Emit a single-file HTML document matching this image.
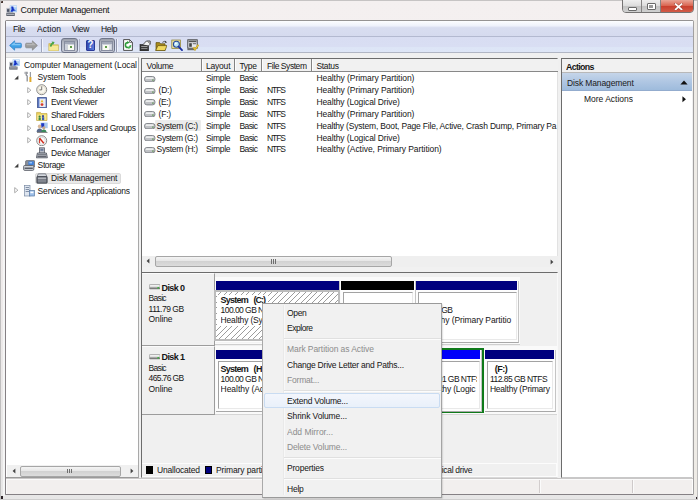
<!DOCTYPE html>
<html lang="en"><head><meta charset="utf-8"><title>Computer Management</title>
<style>

html,body{margin:0;padding:0}
body{width:698px;height:500px;position:relative;overflow:hidden;background:#f4f0f0;font-family:"Liberation Sans",sans-serif;font-size:8.3px;color:#000}
div,span.t,svg{position:absolute;box-sizing:border-box}
.t{white-space:pre;transform:scaleY(1.1);transform-origin:50% 50%}
.vsep{width:1px;background:#a8a8a8;border-right:0}
.hatch{background:repeating-linear-gradient(135deg,#fff 0,#fff 3.25px,#9c9c9c 3.25px,#9c9c9c 4px)}
.thumb{border:1px solid #a6a6a6;border-radius:2px;background:linear-gradient(#f4f4f4 0,#e6e6e6 45%,#d2d2d2 50%,#dcdcdc 100%)}
.tbbtn{border:1.4px solid #70768a;border-radius:3px;background:linear-gradient(#9a9eaa 0,#b4b8c4 30%,#c6cad6 100%)}

</style></head><body>
<div style="left:0px;top:0px;width:698px;height:500px;background:linear-gradient(#f4f0f0 0,#f2eded 40%,#e7e6e6 100%)"></div>
<div style="left:0px;top:0px;width:698px;height:1px;background:#c6c4c4"></div>
<div style="left:0px;top:0px;width:1px;height:500px;background:#c0bfbf"></div>
<div style="left:3px;top:20px;width:2px;height:476px;background:#f5f5f5"></div>
<div style="left:697px;top:0px;width:1px;height:500px;background:#bdbcbc"></div>
<div style="left:694px;top:20px;width:3px;height:476px;background:#eeebe6"></div>
<div style="left:0px;top:499px;width:698px;height:1px;background:#cfcece"></div>
<div style="left:1px;top:1px;width:1.6px;height:2.2px;background:#46342f;border-radius:1px 0 0 0"></div>
<div style="left:1px;top:496.4px;width:1.6px;height:2.4px;background:#2a2024"></div>
<div style="left:695.6px;top:497.4px;width:1.4px;height:1.6px;background:#2a2024"></div>
<span class="t" style="left:20.6px;top:4.20px;font-size:8.9px;line-height:12px;color:#111;letter-spacing:-0.236px;">Computer Management</span>
<svg style="left:6px;top:4.8px;" width="11.4" height="11.4" viewBox="0 0 11 11"><rect x="3.6" y="0.4" width="7.2" height="6.6" fill="#a9cdf4"/><rect x="4.2" y="1" width="6" height="1.2" fill="#e4f0fc"/><path d="M5 1.4 L7 1.4 L7.6 4 L9.6 5.4 L7.4 5.6 L6.2 6.6 L4.4 6.6 L5.4 4 Z" fill="#1431c4"/><rect x="0.4" y="2.8" width="3.6" height="4.6" fill="#b4b8c2"/><rect x="1" y="4" width="2.2" height="2.6" fill="#4a5164"/><rect x="0.3" y="7.6" width="8.2" height="3" fill="#5c616c"/><rect x="0.9" y="8.5" width="7" height="0.9" fill="#c9ccd4"/><rect x="1.6" y="7.2" width="5.4" height="0.7" fill="#8d929c"/></svg>
<div style="left:622.3px;top:-1px;width:71.7px;height:14.4px;border:1px solid #757373;border-radius:0 0 4px 4px;overflow:hidden;background:#ddd"><div style="left:0px;top:0px;width:19px;height:13px;background:linear-gradient(#efefef,#dcdcdc 45%,#c4c4c4 50%,#d2d2d2);border-right:1px solid #858383"></div><div style="left:19px;top:0px;width:18.5px;height:13px;background:linear-gradient(#efefef,#dcdcdc 45%,#c4c4c4 50%,#d2d2d2);border-right:1px solid #858383"></div><div style="left:37.5px;top:0px;width:33px;height:13px;background:linear-gradient(#e9a596,#d9634f 45%,#c9402e 50%,#d4604c)"></div></div>
<div style="left:627.7px;top:7px;width:9.5px;height:3.6px;background:#fff;border:1px solid #6a6a6a;border-radius:1px"></div>
<div style="left:647.2px;top:3.2px;width:8.4px;height:6.8px;background:#fff;border:1px solid #6a6a6a;border-radius:1px"><div style="left:1.3px;top:1.2px;width:3.8px;height:2.4px;background:#9a9a9a"></div></div>
<svg style="left:673.8px;top:2.9px" width="9.2" height="7.6" viewBox="0 0 11 9"><path d="M1.8 1.2 L9.2 7.8 M9.2 1.2 L1.8 7.8" stroke="#7a3026" stroke-width="3.4" stroke-linecap="square" opacity=".55"/><path d="M2 1.4 L9 7.6 M9 1.4 L2 7.6" stroke="#fff" stroke-width="2.1" stroke-linecap="square"/></svg>
<div style="left:4.8px;top:19.6px;width:689.2px;height:475.7px;border:1px solid #858084;border-top-color:#959393;border-right-color:#a2a0a0;background:#f0f0f0;border-radius:1.5px"></div>
<div style="left:5.8px;top:56.6px;width:1.2px;height:421.4px;background:#908b8f"></div>
<div style="left:6px;top:20.5px;width:687px;height:16px;background:linear-gradient(#fcfdff 0,#eef1fb 30%,#d8ddf0 42%,#d5daee 100%)"></div>
<div style="left:6px;top:36.3px;width:687px;height:1px;background:#b3b9d0"></div>
<div style="left:6px;top:37.3px;width:687px;height:14.7px;background:linear-gradient(#d8ddf2 0,#d9def3 66%,#dde5f6 70%,#dee6f7 100%)"></div>
<div style="left:6px;top:51.9px;width:687px;height:1.1px;background:#b1b6c4"></div>
<span class="t" style="left:13px;top:22.60px;font-size:8.5px;line-height:12px;color:#151515;letter-spacing:-0.401px;">File</span>
<span class="t" style="left:37px;top:22.60px;font-size:8.5px;line-height:12px;color:#151515;letter-spacing:0.075px;">Action</span>
<span class="t" style="left:72px;top:22.60px;font-size:8.5px;line-height:12px;color:#151515;letter-spacing:-0.294px;">View</span>
<span class="t" style="left:101px;top:22.60px;font-size:8.5px;line-height:12px;color:#151515;letter-spacing:-0.295px;">Help</span>
<svg style="left:8.5px;top:39.5px;" width="13" height="11" viewBox="0 0 13 11"><path d="M0.6 5.5 L5.6 0.8 L5.6 3.2 L11.5 3.2 Q12.4 3.2 12.4 4.2 L12.4 6.8 Q12.4 7.8 11.5 7.8 L5.6 7.8 L5.6 10.2 Z" fill="#3fa0e6" stroke="#2b7fc4" stroke-width=".7"/><path d="M2 5.3 L5.9 2 L5.9 4 L11.5 4 L11.5 5.3 Z" fill="#8fd0fa" opacity=".8"/></svg>
<svg style="left:24.5px;top:39.5px;" width="13" height="11" viewBox="0 0 13 11"><path d="M12.4 5.5 L7.4 0.8 L7.4 3.2 L1.5 3.2 Q0.6 3.2 0.6 4.2 L0.6 6.8 Q0.6 7.8 1.5 7.8 L7.4 7.8 L7.4 10.2 Z" fill="#9b9b9b" stroke="#858585" stroke-width=".7"/><path d="M11 5.3 L7.1 2 L7.1 4 L1.5 4 L1.5 5.3 Z" fill="#bdbdbd" opacity=".8"/></svg>
<div style="left:41px;top:39px;width:1px;height:13px;background:#9ea4ba"></div>
<div style="left:42px;top:39px;width:1px;height:13px;background:#f2f4fb"></div>
<svg style="left:47.5px;top:39.6px;" width="11.5" height="11.5" viewBox="0 0 11.5 11.5"><path d="M0.8 3.6 L4.2 3.6 L5.2 4.8 L10.4 4.8 L10.4 10.8 L0.8 10.8 Z" fill="#e6cf62" stroke="#c4ad4c" stroke-width=".6"/><path d="M1.2 5.8 L10 5.8 L10 10.4 L1.2 10.4 Z" fill="#f6ea98"/><path d="M2.6 6.6 Q3.4 3.4 5.4 3.2" fill="none" stroke="#4aa548" stroke-width="1.7"/><path d="M3.6 1.6 L6.6 2 L5.2 4.6 Z" fill="#4aa548"/></svg>
<div class="tbbtn" style="left:61px;top:38.3px;width:16.5px;height:15px;"></div>
<div style="left:63.5px;top:41.2px;width:11.5px;height:9.6px;background:#cdd1db;border:1px solid #888ea0"><div style="left:0px;top:0px;width:9.5px;height:1.8px;background:#a2a8b8"></div><div style="left:3.4px;top:2.6px;width:6px;height:4.8px;background:#f8faf2"></div><div style="left:5.4px;top:3.8px;width:2px;height:2px;background:#5e9a48"></div></div>
<div style="left:78.6px;top:39px;width:1.4px;height:13px;background:#b2b6c8"></div>
<div style="left:85.5px;top:39.5px;width:9.5px;height:11.5px;background:linear-gradient(100deg,#2f43aa,#5a7cde);border:1px solid #2a3a98;border-radius:1px"></div>
<span class="t" style="left:87.6px;top:39.40px;font-size:9.5px;line-height:12px;color:#fff;font-weight:bold;">?</span>
<div class="tbbtn" style="left:98.5px;top:38.3px;width:16.5px;height:15px;"></div>
<div style="left:101px;top:41.2px;width:11.5px;height:9.6px;background:#cdd1db;border:1px solid #888ea0"><div style="left:0px;top:0px;width:9.5px;height:1.8px;background:#a2a8b8"></div><div style="left:1.4px;top:2.6px;width:5.4px;height:4.8px;background:#f8faf2"></div><div style="left:3px;top:3.8px;width:2px;height:2px;background:#5e9a48"></div><div style="left:7.4px;top:3px;width:1.4px;height:4px;background:#dfe2ea"></div></div>
<div style="left:116.4px;top:39px;width:1px;height:13px;background:#9499ae"></div>
<div style="left:117.4px;top:39px;width:1px;height:13px;background:#eef1fa"></div>
<svg style="left:123px;top:39.3px;" width="10" height="12" viewBox="0 0 10 12"><path d="M0.6 0.6 L6.6 0.6 L9.4 3.4 L9.4 11.4 L0.6 11.4 Z" fill="#fff" stroke="#3c3c3c" stroke-width=".9"/><path d="M6.6 0.6 L6.6 3.4 L9.4 3.4" fill="none" stroke="#3c3c3c" stroke-width=".7"/><path d="M5 3.4 A2.6 2.6 0 1 0 7.6 6.2" fill="none" stroke="#2e9a3a" stroke-width="1.5"/><path d="M4.2 1.9 L6.6 3.5 L4.4 5 Z" fill="#2e9a3a"/><path d="M5 8.9 A2.6 2.6 0 0 0 7.5 6.6" fill="none" stroke="#46b552" stroke-width="1.4"/></svg>
<svg style="left:138.5px;top:39.5px;" width="12" height="11.5" viewBox="0 0 12 11.5"><rect x="1" y="4.6" width="8.6" height="6.4" fill="#3a3a3a" stroke="#1e1e1e" stroke-width=".6"/><rect x="2.2" y="6" width="6.2" height="1" fill="#9a9a9a"/><rect x="2.2" y="8" width="6.2" height="1" fill="#8a8a8a"/><path d="M4 4.6 L7.4 1 L11.2 1 L11.2 4.2 L9.8 5.6" fill="#f4f4f4" stroke="#2a2a2a" stroke-width=".8"/><path d="M8.8 1.4 L10.8 3.6" stroke="#444" stroke-width=".8"/></svg>
<svg style="left:154.5px;top:39.5px;" width="12.5" height="11.5" viewBox="0 0 12.5 11.5"><path d="M1 2.6 L4.6 2.6 L5.6 3.8 L10 3.8 L10 10.6 L1 10.6 Z" fill="#a88b1c" stroke="#5e4d10" stroke-width=".7"/><path d="M0.7 10.6 L2.8 5.6 L12 5.6 L10 10.6 Z" fill="#f0d860" stroke="#5e4d10" stroke-width=".7"/><path d="M7.4 2.4 Q9.4 0.4 11.4 2.2" fill="none" stroke="#333" stroke-width=".8"/><path d="M10.4 0.8 L11.8 2.6 L9.8 2.8 Z" fill="#333"/></svg>
<svg style="left:170.5px;top:39.3px;" width="12" height="12" viewBox="0 0 12 12"><rect x="0.8" y="1" width="8.8" height="8.6" fill="#e8dfa0" stroke="#8a7d30" stroke-width=".7"/><circle cx="5.4" cy="5.2" r="3" fill="#b9e4f4" stroke="#2a4a9a" stroke-width="1.1"/><path d="M7.6 7.6 L11 11.2" stroke="#1a2fa0" stroke-width="1.8" stroke-linecap="round"/><circle cx="4.8" cy="4.6" r="1" fill="#fff"/></svg>
<svg style="left:186.5px;top:39.3px;" width="12" height="12" viewBox="0 0 12 12"><rect x="0.8" y="0.8" width="9.4" height="8.4" fill="#e6e8ee" stroke="#3a3a3a" stroke-width=".9"/><rect x="1.6" y="1.6" width="7.8" height="1.6" fill="#555"/><rect x="2.2" y="4.2" width="2.6" height="3.6" fill="#444"/><rect x="5.8" y="4.2" width="3.2" height="1" fill="#666"/><rect x="0.4" y="9.6" width="8" height="1.6" fill="#6a6a6a"/><path d="M6.4 8.2 L8 10.6 L11.4 5.8" fill="none" stroke="#c8a21a" stroke-width="1.7"/><path d="M6.4 8.2 L8 10.6 L11.4 5.8" fill="none" stroke="#f2d650" stroke-width=".7"/></svg>
<div style="left:6px;top:56.6px;width:132.8px;height:421.4px;background:#fff;border-right:1.2px solid #a9a9a9;border-top:1px solid #dcdcdc;border-bottom:1px solid #9a9a9a"></div>
<div style="left:35px;top:172.6px;width:85.5px;height:11px;background:#e9e9e9;border:1px solid #dadada;border-radius:2px"></div>
<span class="t" style="left:24px;top:58.60px;font-size:8.5px;line-height:12px;color:#151515;letter-spacing:-0.072px;width:114px;overflow:hidden;">Computer Management (Local</span>
<span class="t" style="left:37.6px;top:71.10px;font-size:8.5px;line-height:12px;color:#151515;letter-spacing:-0.172px;">System Tools</span>
<span class="t" style="left:51px;top:83.70px;font-size:8.5px;line-height:12px;color:#151515;letter-spacing:-0.317px;">Task Scheduler</span>
<span class="t" style="left:51px;top:96.30px;font-size:8.5px;line-height:12px;color:#151515;letter-spacing:-0.312px;">Event Viewer</span>
<span class="t" style="left:51px;top:108.80px;font-size:8.5px;line-height:12px;color:#151515;letter-spacing:-0.356px;">Shared Folders</span>
<span class="t" style="left:51px;top:121.80px;font-size:8.5px;line-height:12px;color:#151515;letter-spacing:-0.318px;">Local Users and Groups</span>
<span class="t" style="left:51px;top:134.40px;font-size:8.5px;line-height:12px;color:#151515;letter-spacing:-0.167px;">Performance</span>
<span class="t" style="left:51px;top:146.80px;font-size:8.5px;line-height:12px;color:#151515;letter-spacing:-0.222px;">Device Manager</span>
<span class="t" style="left:37.6px;top:159.40px;font-size:8.5px;line-height:12px;color:#151515;letter-spacing:-0.380px;">Storage</span>
<span class="t" style="left:51px;top:172.00px;font-size:8.5px;line-height:12px;color:#151515;letter-spacing:-0.144px;">Disk Management</span>
<span class="t" style="left:37.6px;top:184.60px;font-size:8.5px;line-height:12px;color:#151515;letter-spacing:-0.182px;">Services and Applications</span>
<svg style="left:14px;top:75.1px;" width="5" height="5" viewBox="0 0 5 5"><path d="M4.4 0.4 L4.4 4.4 L0.4 4.4 Z" fill="#3c3c3c"/></svg>
<svg style="left:14px;top:163.4px;" width="5" height="5" viewBox="0 0 5 5"><path d="M4.4 0.4 L4.4 4.4 L0.4 4.4 Z" fill="#3c3c3c"/></svg>
<svg style="left:27.3px;top:86.5px;" width="5" height="6.4" viewBox="0 0 5 6.4"><path d="M0.7 0.6 L3.9 3.2 L0.7 5.8 Z" fill="#fff" stroke="#9a9a9a" stroke-width=".8"/></svg>
<svg style="left:27.3px;top:99.1px;" width="5" height="6.4" viewBox="0 0 5 6.4"><path d="M0.7 0.6 L3.9 3.2 L0.7 5.8 Z" fill="#fff" stroke="#9a9a9a" stroke-width=".8"/></svg>
<svg style="left:27.3px;top:111.6px;" width="5" height="6.4" viewBox="0 0 5 6.4"><path d="M0.7 0.6 L3.9 3.2 L0.7 5.8 Z" fill="#fff" stroke="#9a9a9a" stroke-width=".8"/></svg>
<svg style="left:27.3px;top:124.6px;" width="5" height="6.4" viewBox="0 0 5 6.4"><path d="M0.7 0.6 L3.9 3.2 L0.7 5.8 Z" fill="#fff" stroke="#9a9a9a" stroke-width=".8"/></svg>
<svg style="left:27.3px;top:137.20000000000002px;" width="5" height="6.4" viewBox="0 0 5 6.4"><path d="M0.7 0.6 L3.9 3.2 L0.7 5.8 Z" fill="#fff" stroke="#9a9a9a" stroke-width=".8"/></svg>
<svg style="left:14.3px;top:187.4px;" width="5" height="6.4" viewBox="0 0 5 6.4"><path d="M0.7 0.6 L3.9 3.2 L0.7 5.8 Z" fill="#fff" stroke="#9a9a9a" stroke-width=".8"/></svg>
<svg style="left:9.4px;top:59px;" width="11" height="11" viewBox="0 0 11 11"><rect x="3.6" y="0.4" width="7.2" height="6.6" fill="#a9cdf4"/><rect x="4.2" y="1" width="6" height="1.2" fill="#e4f0fc"/><path d="M5 1.4 L7 1.4 L7.6 4 L9.6 5.4 L7.4 5.6 L6.2 6.6 L4.4 6.6 L5.4 4 Z" fill="#1431c4"/><rect x="0.4" y="2.8" width="3.6" height="4.6" fill="#b4b8c2"/><rect x="1" y="4" width="2.2" height="2.6" fill="#4a5164"/><rect x="0.3" y="7.6" width="8.2" height="3" fill="#5c616c"/><rect x="0.9" y="8.5" width="7" height="0.9" fill="#c9ccd4"/><rect x="1.6" y="7.2" width="5.4" height="0.7" fill="#8d929c"/></svg>
<svg style="left:23.5px;top:71px;" width="9" height="12" viewBox="0 0 9 12"><path d="M2.2 0.8 L2.2 4 L3.2 5 L3.2 10.6" stroke="#8a8d94" stroke-width="1.3" fill="none"/><path d="M1 0.8 L1 3 M3.4 0.8 L3.4 3" stroke="#8a8d94" stroke-width=".8"/><path d="M6.4 1 L6.4 6" stroke="#9a9da4" stroke-width="1.2"/><path d="M6.4 6 L6.4 11" stroke="#e0a92a" stroke-width="2"/></svg>
<svg style="left:36px;top:84px;" width="11.5" height="11.5" viewBox="0 0 11.5 11.5"><circle cx="5.7" cy="5.7" r="5" fill="#f8f6ee" stroke="#8a8a8a" stroke-width="1"/><circle cx="5.7" cy="5.7" r="3.9" fill="none" stroke="#d8d2c0" stroke-width=".6"/><path d="M5.7 2.4 L5.7 5.9 L3.4 5.9" fill="none" stroke="#555" stroke-width=".8"/></svg>
<svg style="left:37px;top:96.6px;" width="10" height="11.5" viewBox="0 0 10 11.5"><rect x="0.6" y="0.6" width="8.8" height="10.2" fill="#5b79c4" stroke="#3c4f8c" stroke-width=".8"/><rect x="2.4" y="1.6" width="6.2" height="8.4" fill="#e9ecf4"/><circle cx="5" cy="7.6" r="1.4" fill="#d83a2a"/><path d="M5 2.4 L6.4 5.2 L3.6 5.2 Z" fill="#e8b820"/></svg>
<svg style="left:36px;top:109.5px;" width="12" height="11" viewBox="0 0 12 11"><path d="M0.6 2.4 L4.4 2.4 L5.4 3.6 L11 3.6 L11 10.4 L0.6 10.4 Z" fill="#e9cf5a" stroke="#b89b2e" stroke-width=".6"/><rect x="1.2" y="4.6" width="9.2" height="5.4" fill="#f6e891"/><circle cx="3.6" cy="6.6" r="1.1" fill="#3a7a3a"/><rect x="2.6" y="7.6" width="2.2" height="2.6" fill="#3a8a4a"/><circle cx="7" cy="6.2" r="1.1" fill="#3a4a9a"/><rect x="6" y="7.2" width="2.2" height="3" fill="#3a5ab0"/></svg>
<svg style="left:35.5px;top:122px;" width="12.5" height="11.5" viewBox="0 0 12.5 11.5"><rect x="4.5" y="0.6" width="7.2" height="5.6" fill="#a8c8f0"/><rect x="5.2" y="1.2" width="3" height="4.2" fill="#2038c0"/><circle cx="3.6" cy="4.4" r="1.8" fill="#d8b898"/><path d="M0.6 10 Q0.8 6.4 3.6 6.4 Q6.4 6.4 6.6 10 Z" fill="#5a6a8a"/><circle cx="7.8" cy="5.8" r="1.6" fill="#c8a888"/><path d="M5.2 10.6 Q5.4 7.6 7.8 7.6 Q10.4 7.6 10.6 10.6 Z" fill="#3a8a5a"/><rect x="1" y="10" width="10.5" height="1" fill="#8a8a8a"/></svg>
<svg style="left:36px;top:134.8px;" width="11.5" height="11.5" viewBox="0 0 11.5 11.5"><circle cx="5.7" cy="5.7" r="5" fill="#fbfbfb" stroke="#8a8a8a" stroke-width="1"/><circle cx="5.7" cy="5.7" r="3.6" fill="none" stroke="#c8c8c8" stroke-width=".6"/><path d="M3.6 3.2 L7.8 8.2" stroke="#d22a1a" stroke-width="1.4"/><path d="M3.6 8.2 L3.6 3.2" stroke="#d22a1a" stroke-width="1"/></svg>
<svg style="left:36px;top:147.2px;" width="12" height="11.5" viewBox="0 0 12 11.5"><rect x="3.4" y="0.8" width="5" height="5.4" fill="#b8bcc6" stroke="#5a5e68" stroke-width=".8"/><rect x="4.4" y="1.8" width="3" height="2" fill="#6a7a9a"/><path d="M1.4 6 L10.4 6 L11.4 10.8 L0.4 10.8 Z" fill="#c4c8d0" stroke="#4a4e58" stroke-width=".8"/><rect x="1.6" y="7.4" width="8.6" height="0.9" fill="#4a4e58"/><rect x="1.4" y="9.2" width="9" height="0.9" fill="#4a4e58"/></svg>
<svg style="left:22.5px;top:160px;" width="12.5" height="11" viewBox="0 0 12.5 11"><rect x="2.6" y="0.6" width="9.2" height="6.4" rx="1" fill="#8a909a" stroke="#5a5e68" stroke-width=".7"/><rect x="5.4" y="1.4" width="5.4" height="3.6" fill="#3f82e0"/><rect x="6.4" y="2" width="2.6" height="1.4" fill="#9cc6f6"/><rect x="0.6" y="5.4" width="10.2" height="5" rx="1.2" fill="#cfd2d8" stroke="#4e525c" stroke-width=".8"/><rect x="1.6" y="7.6" width="8.2" height="1.2" fill="#3e424c"/></svg>
<svg style="left:36px;top:172.6px;" width="12" height="11" viewBox="0 0 12 11"><path d="M2.4 0.8 L9.6 0.8 L11 3.6 L1 3.6 Z" fill="#d4d8de" stroke="#5a5e68" stroke-width=".7"/><rect x="0.8" y="3.6" width="10.4" height="6.6" rx=".8" fill="#5c606a" stroke="#3a3e46" stroke-width=".7"/><rect x="1.8" y="4.6" width="8.4" height="1.1" fill="#d8dbe0"/><rect x="1.8" y="6.6" width="8.4" height="0.9" fill="#a8acb4"/><rect x="1.8" y="8.4" width="8.4" height="0.9" fill="#9a9ea6"/></svg>
<svg style="left:23.5px;top:185px;" width="11" height="12" viewBox="0 0 11 12"><rect x="0.6" y="0.6" width="5.4" height="10.4" fill="#dfe6f0" stroke="#7a8aa4" stroke-width=".7"/><rect x="1.6" y="2" width="3.4" height="0.8" fill="#6a7a94"/><rect x="1.6" y="4" width="3.4" height="0.8" fill="#6a7a94"/><rect x="1.6" y="6" width="3.4" height="0.8" fill="#6a7a94"/><rect x="5.4" y="5.4" width="5" height="5.6" fill="#9ec0ea" stroke="#5a7aa4" stroke-width=".7"/><rect x="6.4" y="6.6" width="3" height="1.6" fill="#fff"/></svg>
<div style="left:7px;top:465px;width:131px;height:12.4px;background:#f0f0f0"></div>
<div class="thumb" style="left:20px;top:465.6px;width:100.5px;height:11.2px;"></div>
<div style="left:67px;top:468.6px;width:1px;height:4.8px;background:#6e6e6e"></div>
<div style="left:69px;top:468.6px;width:1px;height:4.8px;background:#6e6e6e"></div>
<div style="left:71px;top:468.6px;width:1px;height:4.8px;background:#6e6e6e"></div>
<svg style="left:11.5px;top:468.3px;" width="4" height="6" viewBox="0 0 4 6"><path d="M3.4 0.4 L0.6 3 L3.4 5.6 Z" fill="#444"/></svg>
<svg style="left:129.5px;top:468.3px;" width="4" height="6" viewBox="0 0 4 6"><path d="M0.6 0.4 L3.4 3 L0.6 5.6 Z" fill="#444"/></svg>
<div style="left:140.7px;top:57.6px;width:417px;height:215.3px;background:#fff;border:1px solid #6c6c6c;border-top-width:1.3px;border-left-width:1.3px;border-right-color:#e2e2e2"></div>
<div style="left:556px;top:269.4px;width:1px;height:3px;background:#777"></div>
<div style="left:142px;top:58.6px;width:415.5px;height:13.2px;background:#f1f1f1;border-bottom:1.2px solid #888"></div>
<div style="left:200.5px;top:58.6px;width:1.1px;height:12.2px;background:#828282"></div>
<div style="left:201.6px;top:59px;width:1px;height:11.6px;background:#fdfdfd"></div>
<div style="left:234px;top:58.6px;width:1.1px;height:12.2px;background:#828282"></div>
<div style="left:235.1px;top:59px;width:1px;height:11.6px;background:#fdfdfd"></div>
<div style="left:261px;top:58.6px;width:1.1px;height:12.2px;background:#828282"></div>
<div style="left:262.1px;top:59px;width:1px;height:11.6px;background:#fdfdfd"></div>
<div style="left:311px;top:58.6px;width:1.1px;height:12.2px;background:#828282"></div>
<div style="left:312.1px;top:59px;width:1px;height:11.6px;background:#fdfdfd"></div>
<span class="t" style="left:146.6px;top:59.50px;font-size:8.5px;line-height:12px;color:#151515;letter-spacing:-0.272px;">Volume</span>
<span class="t" style="left:206px;top:59.50px;font-size:8.5px;line-height:12px;color:#151515;letter-spacing:-0.206px;">Layout</span>
<span class="t" style="left:239.4px;top:59.50px;font-size:8.5px;line-height:12px;color:#151515;letter-spacing:-0.312px;">Type</span>
<span class="t" style="left:267px;top:59.50px;font-size:8.5px;line-height:12px;color:#151515;letter-spacing:-0.441px;">File System</span>
<span class="t" style="left:316.4px;top:59.50px;font-size:8.5px;line-height:12px;color:#151515;letter-spacing:-0.322px;">Status</span>
<div style="left:155px;top:120.2px;width:45.5px;height:10.8px;background:#ebebeb;border-radius:1px"></div>
<svg style="left:144px;top:75.6px;" width="11.5" height="6.4" viewBox="0 0 11.5 6.4"><rect x="0.5" y="0.5" width="10.5" height="5.4" rx="2.4" fill="#bfc1c5" stroke="#7c7f85" stroke-width=".9"/><rect x="1.6" y="1.2" width="8" height="1.9" rx=".9" fill="#eceded"/><rect x="8" y="3.5" width="1.8" height="1.2" fill="#6a9a60"/></svg>
<span class="t" style="left:206px;top:72.30px;font-size:8.5px;line-height:12px;color:#151515;letter-spacing:-0.297px;">Simple</span>
<span class="t" style="left:239.4px;top:72.30px;font-size:8.5px;line-height:12px;color:#151515;letter-spacing:-0.574px;">Basic</span>
<span class="t" style="left:316.4px;top:72.30px;font-size:8.5px;line-height:12px;color:#151515;letter-spacing:-0.064px;">Healthy (Primary Partition)</span>
<svg style="left:144px;top:87.5px;" width="11.5" height="6.4" viewBox="0 0 11.5 6.4"><rect x="0.5" y="0.5" width="10.5" height="5.4" rx="2.4" fill="#bfc1c5" stroke="#7c7f85" stroke-width=".9"/><rect x="1.6" y="1.2" width="8" height="1.9" rx=".9" fill="#eceded"/><rect x="8" y="3.5" width="1.8" height="1.2" fill="#6a9a60"/></svg>
<span class="t" style="left:158.6px;top:84.20px;font-size:8.5px;line-height:12px;color:#151515;letter-spacing:-0.224px;">(D:)</span>
<span class="t" style="left:206px;top:84.20px;font-size:8.5px;line-height:12px;color:#151515;letter-spacing:-0.297px;">Simple</span>
<span class="t" style="left:239.4px;top:84.20px;font-size:8.5px;line-height:12px;color:#151515;letter-spacing:-0.574px;">Basic</span>
<span class="t" style="left:267px;top:84.20px;font-size:8.5px;line-height:12px;color:#151515;letter-spacing:-1.068px;">NTFS</span>
<span class="t" style="left:316.4px;top:84.20px;font-size:8.5px;line-height:12px;color:#151515;letter-spacing:-0.064px;">Healthy (Primary Partition)</span>
<svg style="left:144px;top:99.3px;" width="11.5" height="6.4" viewBox="0 0 11.5 6.4"><rect x="0.5" y="0.5" width="10.5" height="5.4" rx="2.4" fill="#bfc1c5" stroke="#7c7f85" stroke-width=".9"/><rect x="1.6" y="1.2" width="8" height="1.9" rx=".9" fill="#eceded"/><rect x="8" y="3.5" width="1.8" height="1.2" fill="#6a9a60"/></svg>
<span class="t" style="left:158.6px;top:96.00px;font-size:8.5px;line-height:12px;color:#151515;letter-spacing:-0.401px;">(E:)</span>
<span class="t" style="left:206px;top:96.00px;font-size:8.5px;line-height:12px;color:#151515;letter-spacing:-0.297px;">Simple</span>
<span class="t" style="left:239.4px;top:96.00px;font-size:8.5px;line-height:12px;color:#151515;letter-spacing:-0.574px;">Basic</span>
<span class="t" style="left:267px;top:96.00px;font-size:8.5px;line-height:12px;color:#151515;letter-spacing:-1.068px;">NTFS</span>
<span class="t" style="left:316.4px;top:96.00px;font-size:8.5px;line-height:12px;color:#151515;letter-spacing:-0.113px;">Healthy (Logical Drive)</span>
<svg style="left:144px;top:111.1px;" width="11.5" height="6.4" viewBox="0 0 11.5 6.4"><rect x="0.5" y="0.5" width="10.5" height="5.4" rx="2.4" fill="#bfc1c5" stroke="#7c7f85" stroke-width=".9"/><rect x="1.6" y="1.2" width="8" height="1.9" rx=".9" fill="#eceded"/><rect x="8" y="3.5" width="1.8" height="1.2" fill="#6a9a60"/></svg>
<span class="t" style="left:158.6px;top:107.80px;font-size:8.5px;line-height:12px;color:#151515;letter-spacing:-0.240px;">(F:)</span>
<span class="t" style="left:206px;top:107.80px;font-size:8.5px;line-height:12px;color:#151515;letter-spacing:-0.297px;">Simple</span>
<span class="t" style="left:239.4px;top:107.80px;font-size:8.5px;line-height:12px;color:#151515;letter-spacing:-0.574px;">Basic</span>
<span class="t" style="left:267px;top:107.80px;font-size:8.5px;line-height:12px;color:#151515;letter-spacing:-1.068px;">NTFS</span>
<span class="t" style="left:316.4px;top:107.80px;font-size:8.5px;line-height:12px;color:#151515;letter-spacing:-0.064px;">Healthy (Primary Partition)</span>
<svg style="left:144px;top:123.0px;" width="11.5" height="6.4" viewBox="0 0 11.5 6.4"><rect x="0.5" y="0.5" width="10.5" height="5.4" rx="2.4" fill="#bfc1c5" stroke="#7c7f85" stroke-width=".9"/><rect x="1.6" y="1.2" width="8" height="1.9" rx=".9" fill="#eceded"/><rect x="8" y="3.5" width="1.8" height="1.2" fill="#6a9a60"/></svg>
<span class="t" style="left:156.6px;top:119.70px;font-size:8.5px;line-height:12px;color:#151515;letter-spacing:-0.338px;">System (C:)</span>
<span class="t" style="left:206px;top:119.70px;font-size:8.5px;line-height:12px;color:#151515;letter-spacing:-0.297px;">Simple</span>
<span class="t" style="left:239.4px;top:119.70px;font-size:8.5px;line-height:12px;color:#151515;letter-spacing:-0.574px;">Basic</span>
<span class="t" style="left:267px;top:119.70px;font-size:8.5px;line-height:12px;color:#151515;letter-spacing:-1.068px;">NTFS</span>
<span class="t" style="left:316.4px;top:119.70px;font-size:8.5px;line-height:12px;color:#151515;letter-spacing:-0.184px;">Healthy (System, Boot, Page File, Active, Crash Dump, Primary Pa</span>
<svg style="left:144px;top:134.8px;" width="11.5" height="6.4" viewBox="0 0 11.5 6.4"><rect x="0.5" y="0.5" width="10.5" height="5.4" rx="2.4" fill="#bfc1c5" stroke="#7c7f85" stroke-width=".9"/><rect x="1.6" y="1.2" width="8" height="1.9" rx=".9" fill="#eceded"/><rect x="8" y="3.5" width="1.8" height="1.2" fill="#6a9a60"/></svg>
<span class="t" style="left:156.6px;top:131.50px;font-size:8.5px;line-height:12px;color:#151515;letter-spacing:-0.384px;">System (G:)</span>
<span class="t" style="left:206px;top:131.50px;font-size:8.5px;line-height:12px;color:#151515;letter-spacing:-0.297px;">Simple</span>
<span class="t" style="left:239.4px;top:131.50px;font-size:8.5px;line-height:12px;color:#151515;letter-spacing:-0.574px;">Basic</span>
<span class="t" style="left:267px;top:131.50px;font-size:8.5px;line-height:12px;color:#151515;letter-spacing:-1.068px;">NTFS</span>
<span class="t" style="left:316.4px;top:131.50px;font-size:8.5px;line-height:12px;color:#151515;letter-spacing:-0.113px;">Healthy (Logical Drive)</span>
<svg style="left:144px;top:146.70000000000002px;" width="11.5" height="6.4" viewBox="0 0 11.5 6.4"><rect x="0.5" y="0.5" width="10.5" height="5.4" rx="2.4" fill="#bfc1c5" stroke="#7c7f85" stroke-width=".9"/><rect x="1.6" y="1.2" width="8" height="1.9" rx=".9" fill="#eceded"/><rect x="8" y="3.5" width="1.8" height="1.2" fill="#6a9a60"/></svg>
<span class="t" style="left:156.6px;top:143.40px;font-size:8.5px;line-height:12px;color:#151515;letter-spacing:-0.338px;">System (H:)</span>
<span class="t" style="left:206px;top:143.40px;font-size:8.5px;line-height:12px;color:#151515;letter-spacing:-0.297px;">Simple</span>
<span class="t" style="left:239.4px;top:143.40px;font-size:8.5px;line-height:12px;color:#151515;letter-spacing:-0.574px;">Basic</span>
<span class="t" style="left:267px;top:143.40px;font-size:8.5px;line-height:12px;color:#151515;letter-spacing:-1.068px;">NTFS</span>
<span class="t" style="left:316.4px;top:143.40px;font-size:8.5px;line-height:12px;color:#151515;letter-spacing:-0.066px;">Healthy (Active, Primary Partition)</span>
<div style="left:142px;top:255.8px;width:415.5px;height:11.6px;background:#efefef"></div>
<div class="thumb" style="left:155px;top:256.3px;width:236.5px;height:10.6px;"></div>
<div style="left:271px;top:259.3px;width:1px;height:4.8px;background:#6e6e6e"></div>
<div style="left:273px;top:259.3px;width:1px;height:4.8px;background:#6e6e6e"></div>
<div style="left:275px;top:259.3px;width:1px;height:4.8px;background:#6e6e6e"></div>
<svg style="left:145.8px;top:258.4px;" width="4" height="6" viewBox="0 0 4 6"><path d="M3.4 0.4 L0.6 3 L3.4 5.6 Z" fill="#444"/></svg>
<svg style="left:549.5px;top:258.6px;" width="4" height="6" viewBox="0 0 4 6"><path d="M0.6 0.4 L3.4 3 L0.6 5.6 Z" fill="#444"/></svg>
<div style="left:142px;top:267px;width:415.5px;height:4.8px;background:#f1f1f1"></div>
<div style="left:140.7px;top:272.9px;width:417.6px;height:204.7px;background:#f0f0f0;border-left:1.3px solid #6c6c6c;border-right:1.4px solid #f9f9f9;border-bottom:1px solid #d9d9d9"></div>
<div style="left:142px;top:272.9px;width:72.5px;height:72.9px;border-right:1px solid #9c9c9c;border-bottom:1px solid #9c9c9c;border-top:1px solid #fbfbfb"></div>
<svg style="left:148.6px;top:284.2px;" width="11.6" height="6" viewBox="0 0 11.6 6"><rect x="0.4" y="0.5" width="10.8" height="3.8" rx=".8" fill="#dedede" stroke="#9c9c9c" stroke-width=".7"/><rect x="0.4" y="3.5" width="10.8" height="1.7" rx=".6" fill="#7c7c7c"/><rect x="1.2" y="1.1" width="9" height="1" fill="#f2f2f2"/><rect x="8.4" y="3" width="1.7" height="1.7" fill="#45ad45"/></svg>
<span class="t" style="left:161.5px;top:281.60px;font-size:9px;line-height:12px;color:#151515;font-weight:bold;letter-spacing:-0.606px;">Disk 0</span>
<span class="t" style="left:148.6px;top:292.20px;font-size:8.5px;line-height:12px;color:#151515;letter-spacing:-0.699px;">Basic</span>
<span class="t" style="left:148.6px;top:302.80px;font-size:8.5px;line-height:12px;color:#151515;letter-spacing:-0.474px;">111.79 GB</span>
<span class="t" style="left:148.6px;top:313.40px;font-size:8.5px;line-height:12px;color:#151515;letter-spacing:-0.116px;">Online</span>
<div style="left:142px;top:345.8px;width:72.5px;height:69px;border-right:1px solid #9c9c9c;border-bottom:1px solid #9c9c9c;border-top:1px solid #fbfbfb"></div>
<svg style="left:148.6px;top:353.6px;" width="11.6" height="6" viewBox="0 0 11.6 6"><rect x="0.4" y="0.5" width="10.8" height="3.8" rx=".8" fill="#dedede" stroke="#9c9c9c" stroke-width=".7"/><rect x="0.4" y="3.5" width="10.8" height="1.7" rx=".6" fill="#7c7c7c"/><rect x="1.2" y="1.1" width="9" height="1" fill="#f2f2f2"/><rect x="8.4" y="3" width="1.7" height="1.7" fill="#45ad45"/></svg>
<span class="t" style="left:161.5px;top:351.00px;font-size:9px;line-height:12px;color:#151515;font-weight:bold;letter-spacing:-0.606px;">Disk 1</span>
<span class="t" style="left:148.6px;top:361.60px;font-size:8.5px;line-height:12px;color:#151515;letter-spacing:-0.699px;">Basic</span>
<span class="t" style="left:148.6px;top:372.20px;font-size:8.5px;line-height:12px;color:#151515;letter-spacing:-0.630px;">465.76 GB</span>
<span class="t" style="left:148.6px;top:382.80px;font-size:8.5px;line-height:12px;color:#151515;letter-spacing:-0.116px;">Online</span>
<div style="left:214.8px;top:276.8px;width:305.6px;height:68.7px;background:#fafafa;border-bottom:1px solid #cfcfcf"></div>
<div style="left:214.8px;top:345.5px;width:342.7px;height:69.2px;background:#fafafa;border-bottom:1px solid #d6d6d6"></div>
<div style="left:215.8px;top:281px;width:124.5px;height:62.2px;background:#fdfdfd;border-right:1.7px solid #c4c4c4;border-bottom:1px solid #f4f4f4"></div>
<div style="left:215.8px;top:281px;width:122.8px;height:8.8px;background:#00007e"></div>
<div class="hatch" style="left:214.20000000000002px;top:290px;width:125.39999999999999px;height:50.6px;border:2.2px solid #bcbcbc"></div>
<div style="left:217.20000000000002px;top:294.6px;width:51.166666666666664px;height:31px;background:#fff"></div>
<span class="t" style="left:220.60000000000002px;top:304.00px;font-size:8.5px;line-height:12px;color:#151515;letter-spacing:-0.554px;">100.00 GB NTFS</span>
<span class="t" style="left:220.60000000000002px;top:314.40px;font-size:8.5px;line-height:12px;color:#151515;letter-spacing:-0.168px;width:115.19999999999999px;overflow:hidden;">Healthy (System, Boot, Page File</span>
<span class="t" style="left:220.6px;top:293.60px;font-size:9px;line-height:12px;color:#151515;font-weight:bold;letter-spacing:-0.766px;">System</span>
<span class="t" style="left:253.6px;top:293.60px;font-size:9px;line-height:12px;color:#151515;font-weight:bold;letter-spacing:-1.033px;">(C:)</span>
<div style="left:341.3px;top:281px;width:74.5px;height:62.2px;background:#fdfdfd;border-right:1.7px solid #c4c4c4;border-bottom:1px solid #a8a8a8"></div>
<div style="left:341.3px;top:281px;width:72.8px;height:8.8px;background:#000"></div>
<div style="left:343.2px;top:291.8px;width:70.2px;height:48.4px;background:#fff;border:1px solid #e9e9e9;border-top-color:#a2a2a2;border-left-color:#a2a2a2"></div>
<div style="left:416.2px;top:281px;width:102.9px;height:62.2px;background:#fdfdfd;border-right:1.7px solid #c4c4c4;border-bottom:1px solid #a8a8a8"></div>
<div style="left:416.2px;top:281px;width:101.2px;height:8.8px;background:#00007e"></div>
<div style="left:418.09999999999997px;top:291.8px;width:98.60000000000001px;height:48.4px;background:#fff;border:1px solid #e9e9e9;border-top-color:#a2a2a2;border-left-color:#a2a2a2"></div>
<span class="t" style="left:421.59999999999997px;top:304.00px;font-size:8.5px;line-height:12px;color:#151515;letter-spacing:-0.557px;">11.79 GB</span>
<span class="t" style="left:421.2px;top:314.40px;font-size:8.5px;line-height:12px;color:#151515;letter-spacing:-0.088px;">Healthy (Primary Partitio</span>
<div style="left:215.8px;top:350px;width:101.7px;height:62.2px;background:#fdfdfd;border-right:1.7px solid #c4c4c4;border-bottom:1px solid #a8a8a8"></div>
<div style="left:215.8px;top:350px;width:100px;height:8.8px;background:#00007e"></div>
<div style="left:217.70000000000002px;top:360.8px;width:97.4px;height:48.4px;background:#fff;border:1px solid #e9e9e9;border-top-color:#a2a2a2;border-left-color:#a2a2a2"></div>
<span class="t" style="left:220.60000000000002px;top:373.00px;font-size:8.5px;line-height:12px;color:#151515;letter-spacing:-0.554px;">100.00 GB NTFS</span>
<span class="t" style="left:220.60000000000002px;top:383.40px;font-size:8.5px;line-height:12px;color:#151515;letter-spacing:-0.045px;width:92.39999999999998px;overflow:hidden;">Healthy (Active, Primary Partition)</span>
<span class="t" style="left:220.6px;top:362.60px;font-size:9px;line-height:12px;color:#151515;font-weight:bold;letter-spacing:-0.766px;">System</span>
<span class="t" style="left:253.6px;top:362.60px;font-size:9px;line-height:12px;color:#151515;font-weight:bold;letter-spacing:-0.700px;">(H:)</span>
<div style="left:317.5px;top:348.2px;width:166.8px;height:64.6px;border:2.6px solid #0f7a1a;background:#fafafa"></div>
<div style="left:320.4px;top:350px;width:98.7px;height:62.2px;background:#fdfdfd;border-right:1.7px solid #c4c4c4;border-bottom:1px solid #a8a8a8"></div>
<div style="left:320.4px;top:350px;width:97px;height:8.8px;background:#0000fa"></div>
<div style="left:322.29999999999995px;top:360.8px;width:94.4px;height:48.4px;background:#fff;border:1px solid #e9e9e9;border-top-color:#a2a2a2;border-left-color:#a2a2a2"></div>
<span class="t" style="left:325.0px;top:373.00px;font-size:8.5px;line-height:12px;color:#151515;letter-spacing:-0.554px;">120.00 GB NTFS</span>
<span class="t" style="left:325.0px;top:383.40px;font-size:8.5px;line-height:12px;color:#151515;letter-spacing:-0.272px;">Healthy (Logical Drive)</span>
<span class="t" style="left:325px;top:362.60px;font-size:9px;line-height:12px;color:#151515;font-weight:bold;letter-spacing:-0.766px;">System</span>
<span class="t" style="left:358px;top:362.60px;font-size:9px;line-height:12px;color:#151515;font-weight:bold;letter-spacing:-1.200px;">(G:)</span>
<div style="left:418.6px;top:350px;width:63.5px;height:62.2px;background:#fdfdfd;border-right:1.7px solid #c4c4c4;border-bottom:1px solid #a8a8a8"></div>
<div style="left:418.6px;top:350px;width:61.8px;height:8.8px;background:#0000fa"></div>
<div style="left:420.5px;top:360.8px;width:59.199999999999996px;height:48.4px;background:#fff;border:1px solid #e9e9e9;border-top-color:#a2a2a2;border-left-color:#a2a2a2"></div>
<span class="t" style="left:423.40000000000003px;top:362.60px;font-size:8.5px;line-height:12px;color:#151515;font-weight:bold;letter-spacing:-0.391px;">(E:)</span>
<span class="t" style="left:423.40000000000003px;top:373.00px;font-size:8.5px;line-height:12px;color:#151515;letter-spacing:-0.554px;width:53.19999999999999px;overflow:hidden;">132.91 GB NTFS</span>
<span class="t" style="left:423.40000000000003px;top:383.40px;font-size:8.5px;line-height:12px;color:#151515;letter-spacing:-0.180px;">Healthy (Logic</span>
<div style="left:485.2px;top:350px;width:70.7px;height:62.2px;background:#fdfdfd;border-right:1.7px solid #c4c4c4;border-bottom:1px solid #a8a8a8"></div>
<div style="left:485.2px;top:350px;width:69px;height:8.8px;background:#00007e"></div>
<div style="left:487.09999999999997px;top:360.8px;width:66.4px;height:48.4px;background:#fff;border:1px solid #e9e9e9;border-top-color:#a2a2a2;border-left-color:#a2a2a2"></div>
<span class="t" style="left:489.9px;top:373.00px;font-size:8.5px;line-height:12px;color:#151515;letter-spacing:-0.529px;">112.85 GB NTFS</span>
<span class="t" style="left:489.9px;top:383.40px;font-size:8.5px;line-height:12px;color:#151515;letter-spacing:-0.218px;width:60.700000000000045px;overflow:hidden;">Healthy (Primary Partition)</span>
<span class="t" style="left:494.7px;top:362.60px;font-size:9px;line-height:12px;color:#151515;font-weight:bold;letter-spacing:-0.500px;">(F:)</span>
<div style="left:142px;top:463.1px;width:414.5px;height:13.6px;border-top:1.2px solid #fcfcfc;border-bottom:1px solid #fcfcfc;border-right:1px solid #fbfbfb"></div>
<div style="left:146px;top:466px;width:7.2px;height:8px;background:#000;border:1px solid #000"></div>
<span class="t" style="left:157px;top:464.00px;font-size:8.5px;line-height:12px;color:#151515;letter-spacing:-0.189px;">Unallocated</span>
<div style="left:205px;top:466px;width:7.2px;height:8px;background:#00007e;border:1px solid #000"></div>
<span class="t" style="left:216px;top:464.00px;font-size:8.5px;line-height:12px;color:#151515;letter-spacing:-0.118px;">Primary partition</span>
<div style="left:281px;top:466px;width:7.2px;height:8px;background:#0f7a1a;border:1px solid #000"></div>
<span class="t" style="left:292px;top:464.00px;font-size:8.5px;line-height:12px;color:#151515;letter-spacing:-0.149px;">Extended partition</span>
<div style="left:363px;top:466px;width:7.2px;height:8px;background:#58d058;border:1px solid #000"></div>
<span class="t" style="left:374px;top:464.00px;font-size:8.5px;line-height:12px;color:#151515;letter-spacing:-0.503px;">Free space</span>
<div style="left:417.6px;top:466px;width:7.2px;height:8px;background:#0000fa;border:1px solid #000"></div>
<span class="t" style="left:428.6px;top:464.00px;font-size:8.5px;line-height:12px;color:#151515;letter-spacing:-0.328px;">Logical drive</span>
<div style="left:561px;top:57.6px;width:131.1px;height:420.4px;background:#fff;border-left:1.2px solid #6c6c6c;border-top:1.3px solid #6c6c6c;border-bottom:1px solid #c8c8c8"></div>
<div style="left:562px;top:58.6px;width:130.1px;height:14px;background:#f1f1f1;border-bottom:1px solid #b8b8b8"></div>
<span class="t" style="left:566px;top:60.70px;font-size:8.8px;line-height:12px;color:#151515;font-weight:bold;letter-spacing:-0.644px;">Actions</span>
<div style="left:562px;top:73px;width:130.1px;height:18px;background:linear-gradient(#c5d5e9 0,#b0c7e3 50%,#9ebbdc 100%);border-bottom:1px solid #93acce"></div>
<span class="t" style="left:567px;top:76.60px;font-size:8.5px;line-height:12px;color:#1a1a1a;letter-spacing:-0.123px;">Disk Management</span>
<svg style="left:680px;top:79.6px;" width="8" height="5" viewBox="0 0 8 5"><path d="M0.4 4.6 L4 0.6 L7.6 4.6 Z" fill="#111"/></svg>
<span class="t" style="left:584px;top:93.20px;font-size:8.5px;line-height:12px;color:#151515;letter-spacing:-0.013px;">More Actions</span>
<svg style="left:682.4px;top:96px;" width="4.4" height="6.6" viewBox="0 0 4 6"><path d="M0.4 0.2 L3.6 3 L0.4 5.8 Z" fill="#111"/></svg>
<div style="left:5.8px;top:478px;width:687.2px;height:1.2px;background:#c9c7c7"></div>
<div style="left:5.8px;top:479.2px;width:687.2px;height:15.1px;background:#f2efee;border-top:1px solid #fbfbfb;border-left:1px solid #fbfbfb;border-right:1.6px solid #fdfdfd"></div>
<div style="left:632px;top:480px;width:1px;height:13px;background:#cfcaca"></div>
<div style="left:538.6px;top:480px;width:1px;height:13px;background:#d2cdcd"></div>
<div style="left:539.6px;top:480px;width:1px;height:13px;background:#fbfbfb"></div>
<div style="left:633px;top:480px;width:1px;height:13px;background:#fbfbfb"></div>
<div style="left:262.4px;top:302.9px;width:179.8px;height:194.7px;background:#f1f1f1;border:1px solid #9a9a9a;border-left-color:#a9a9a9;border-right-color:#a4a4a4;box-shadow:1.2px 1.2px 1.6px rgba(0,0,0,.27);z-index:50"><div style="left:19.4px;top:1px;width:1px;height:190.4px;background:#e9e9e9"></div><div style="left:20.4px;top:1px;width:1px;height:190.4px;background:#f8f8f8"></div></div>
<div style="left:264.4px;top:392.8px;width:176px;height:15.4px;background:linear-gradient(#f3f6fc,#e9f0fa);border:1px solid #c9dcf2;border-radius:2px;z-index:55"></div>
<span class="t" style="left:287px;top:307.00px;font-size:8.5px;line-height:12px;color:#151515;letter-spacing:-0.332px;z-index:60;">Open</span>
<span class="t" style="left:287px;top:322.20px;font-size:8.5px;line-height:12px;color:#151515;letter-spacing:-0.471px;z-index:60;">Explore</span>
<div style="left:283.5px;top:338.3px;width:157px;height:1px;background:#e0e0e0;z-index:60"></div>
<div style="left:283.5px;top:339.3px;width:157px;height:1px;background:#fcfcfc;z-index:60"></div>
<span class="t" style="left:287px;top:342.90px;font-size:8.5px;line-height:12px;color:#8c8c8c;letter-spacing:-0.079px;z-index:60;">Mark Partition as Active</span>
<span class="t" style="left:287px;top:358.60px;font-size:8.5px;line-height:12px;color:#151515;letter-spacing:-0.219px;z-index:60;">Change Drive Letter and Paths...</span>
<span class="t" style="left:287px;top:374.10px;font-size:8.5px;line-height:12px;color:#8c8c8c;letter-spacing:-0.202px;z-index:60;">Format...</span>
<div style="left:283.5px;top:389.9px;width:157px;height:1px;background:#e0e0e0;z-index:60"></div>
<div style="left:283.5px;top:390.9px;width:157px;height:1px;background:#fcfcfc;z-index:60"></div>
<span class="t" style="left:287px;top:395.00px;font-size:8.5px;line-height:12px;color:#151515;letter-spacing:-0.218px;z-index:60;">Extend Volume...</span>
<span class="t" style="left:287px;top:410.40px;font-size:8.5px;line-height:12px;color:#151515;letter-spacing:-0.126px;z-index:60;">Shrink Volume...</span>
<span class="t" style="left:287px;top:426.00px;font-size:8.5px;line-height:12px;color:#8c8c8c;letter-spacing:-0.025px;z-index:60;">Add Mirror...</span>
<span class="t" style="left:287px;top:440.60px;font-size:8.5px;line-height:12px;color:#8c8c8c;letter-spacing:-0.158px;z-index:60;">Delete Volume...</span>
<div style="left:283.5px;top:456.8px;width:157px;height:1px;background:#e0e0e0;z-index:60"></div>
<div style="left:283.5px;top:457.8px;width:157px;height:1px;background:#fcfcfc;z-index:60"></div>
<span class="t" style="left:287px;top:462.00px;font-size:8.5px;line-height:12px;color:#151515;letter-spacing:-0.194px;z-index:60;">Properties</span>
<div style="left:283.5px;top:477.6px;width:157px;height:1px;background:#e0e0e0;z-index:60"></div>
<div style="left:283.5px;top:478.6px;width:157px;height:1px;background:#fcfcfc;z-index:60"></div>
<span class="t" style="left:287px;top:482.90px;font-size:8.5px;line-height:12px;color:#151515;letter-spacing:-0.228px;z-index:60;">Help</span>
</body></html>
